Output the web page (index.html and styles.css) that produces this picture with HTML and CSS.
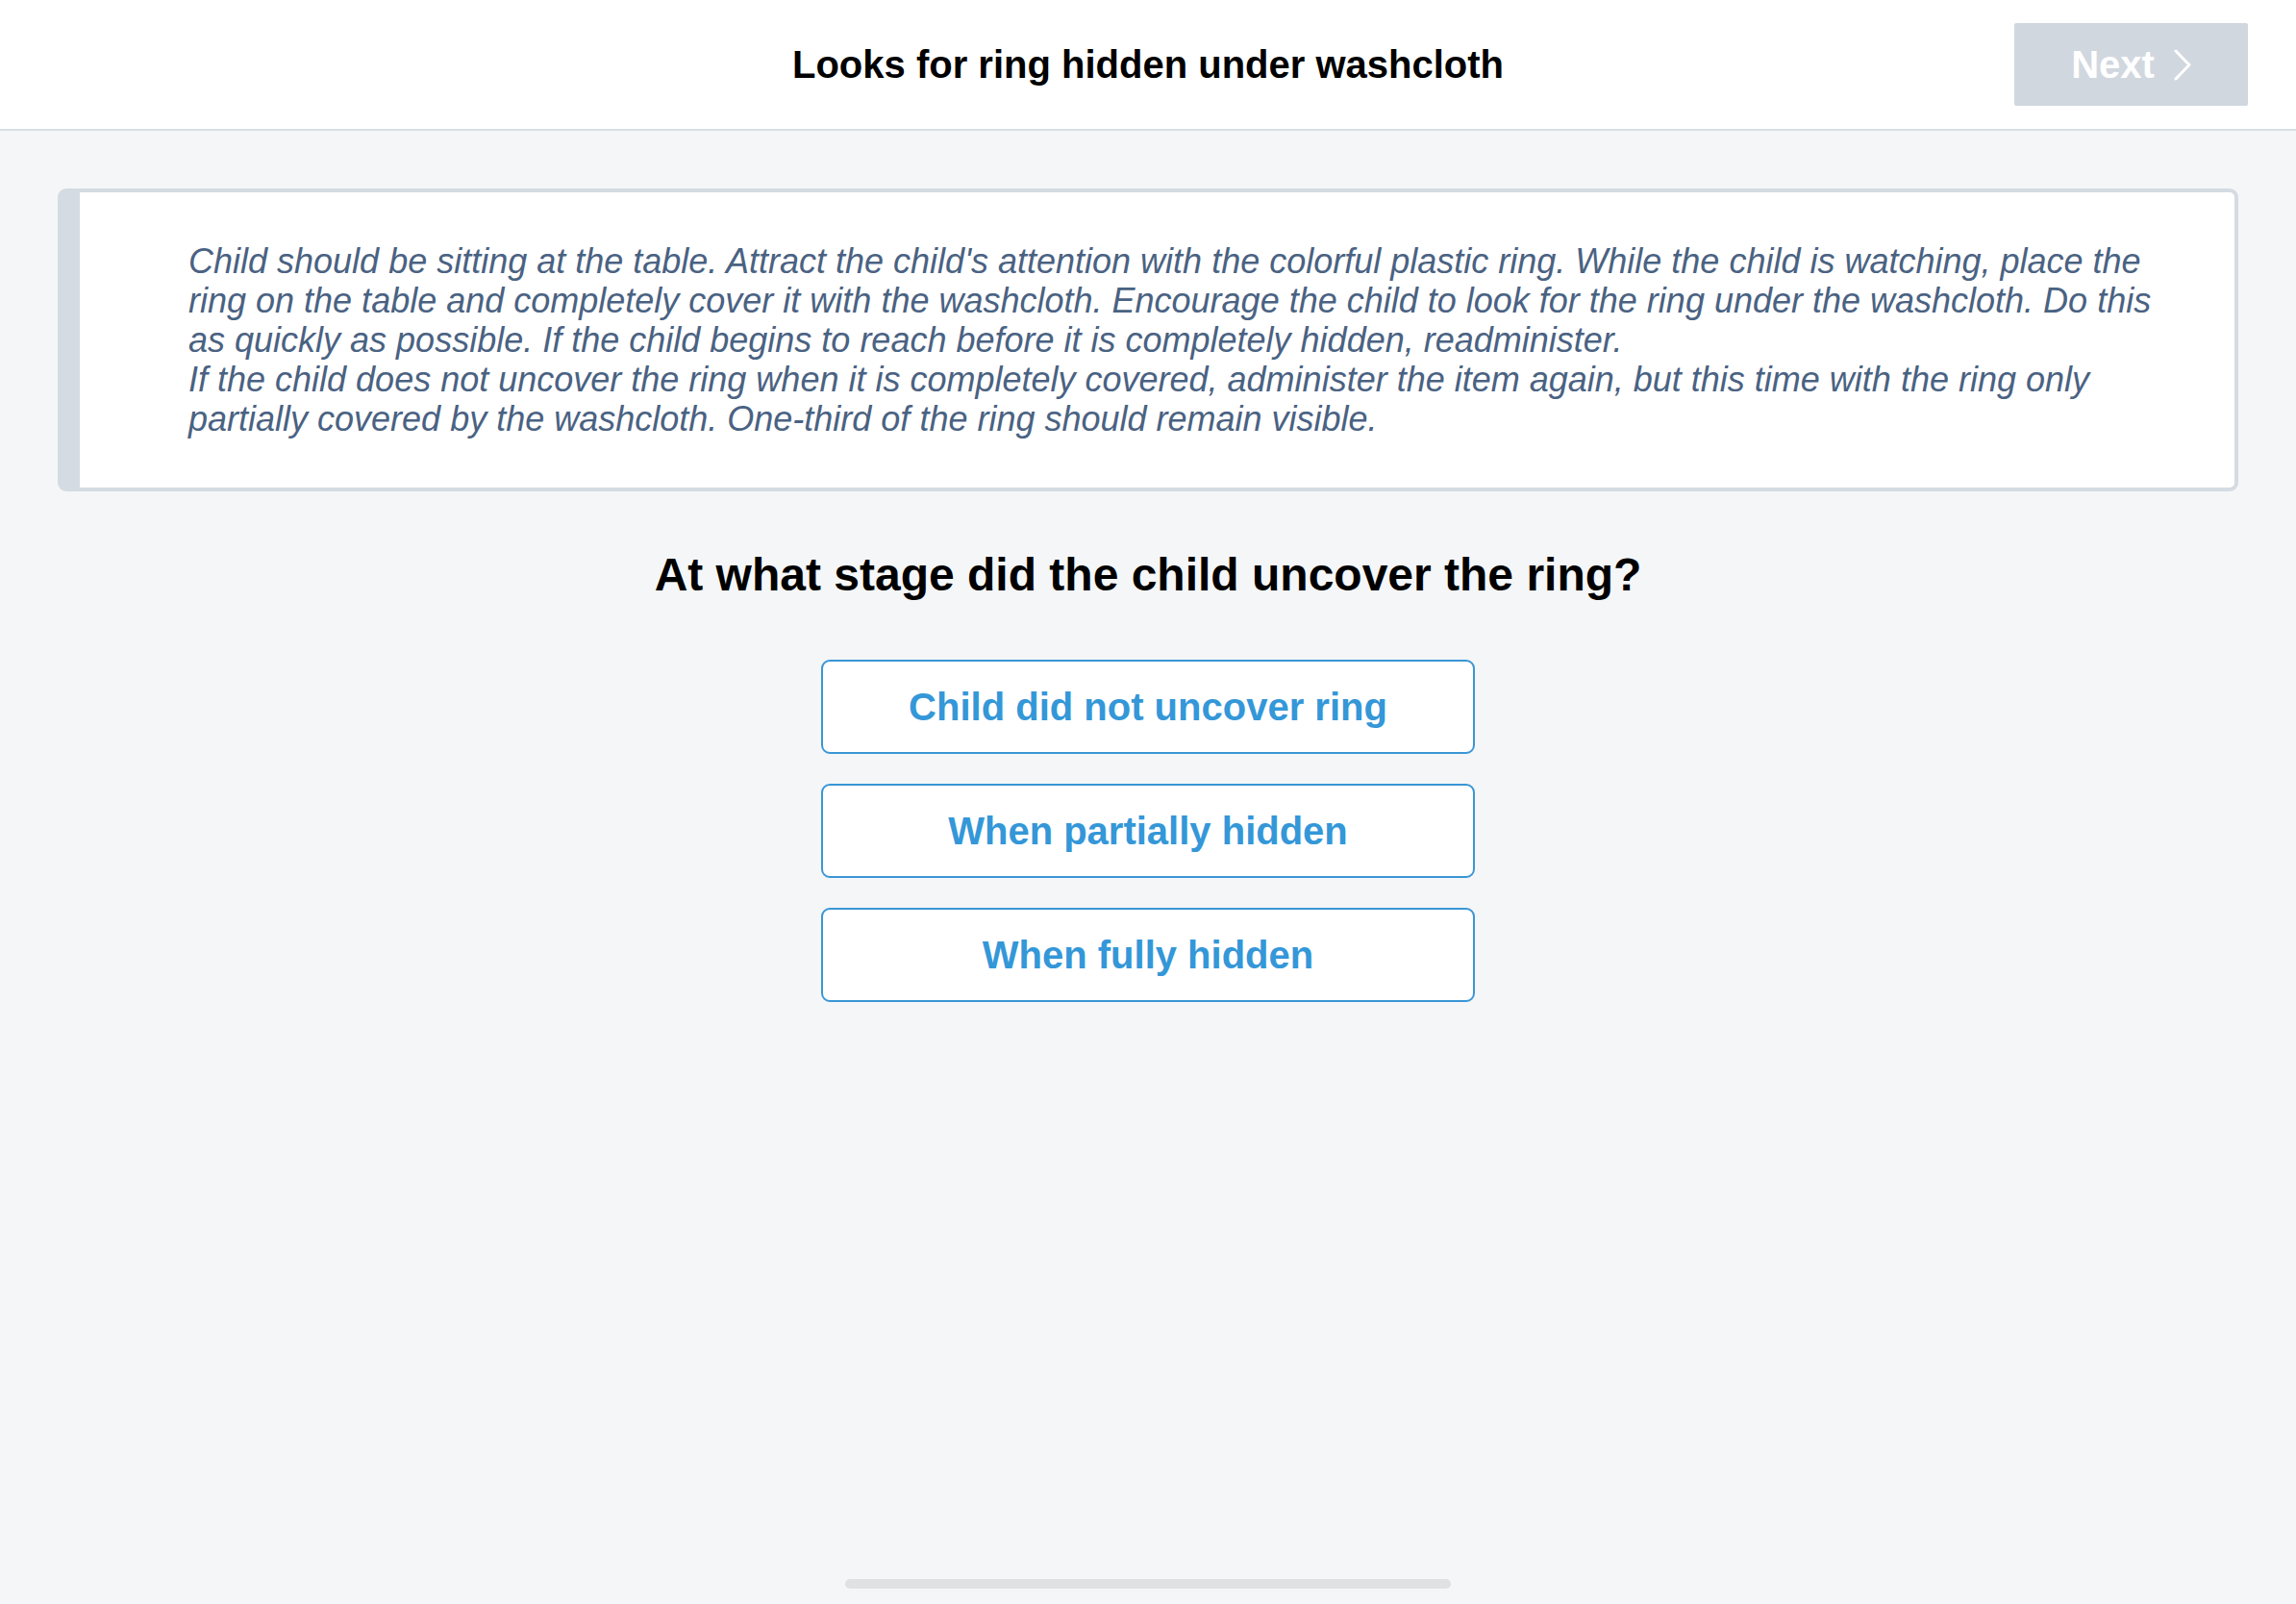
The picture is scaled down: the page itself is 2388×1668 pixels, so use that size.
FILE: index.html
```html
<!DOCTYPE html>
<html lang="en">
<head>
<meta charset="utf-8">
<title>Looks for ring hidden under washcloth</title>
<link rel="stylesheet" href="styles.css">
</head>
<body>
<div class="app">
  <header class="topbar">
    <div class="topbar-side"></div>
    <h1 class="topbar-title">Looks for ring hidden under washcloth</h1>
    <div class="topbar-side topbar-right">
      <button class="next-btn" type="button" disabled>
        <span>Next</span>
        <svg class="next-chevron" width="18" height="33" viewBox="0 0 18 33" aria-hidden="true">
          <polyline points="2,2 16,16.5 2,31" fill="none" stroke="#ffffff" stroke-width="3" stroke-linecap="round" stroke-linejoin="round"/>
        </svg>
      </button>
    </div>
  </header>

  <main class="content">
    <section class="instructions">
      <p>Child should be sitting at the table. Attract the child's attention with the colorful plastic ring. While the child is watching, place the ring on the table and completely cover it with the washcloth. Encourage the child to look for the ring under the washcloth. Do this as quickly as possible. If the child begins to reach before it is completely hidden, readminister.</p>
      <p>If the child does not uncover the ring when it is completely covered, administer the item again, but this time with the ring only partially covered by the washcloth. One-third of the ring should remain visible.</p>
    </section>

    <h2 class="question">At what stage did the child uncover the ring?</h2>

    <div class="options">
      <button class="option" type="button">Child did not uncover ring</button>
      <button class="option" type="button">When partially hidden</button>
      <button class="option" type="button">When fully hidden</button>
    </div>
  </main>

  <footer class="home-area">
    <div class="home-indicator"></div>
  </footer>
</div>
</body>
</html>
```

FILE: styles.css
```css
* {
  box-sizing: border-box;
}

html, body {
  margin: 0;
  padding: 0;
}

body {
  font-family: "Liberation Sans", Arial, Helvetica, sans-serif;
  background: #f4f6f8;
  color: #000;
}

.app {
  display: flex;
  flex-direction: column;
  width: 2388px;
  height: 1668px;
}

.topbar {
  display: grid;
  grid-template-columns: 1fr auto 1fr;
  align-items: center;
  height: 136px;
  background: #ffffff;
  border-bottom: 2px solid #d8dee5;
  padding: 0 50px;
  flex: none;
}

.topbar-title {
  margin: 0;
  font-size: 40px;
  font-weight: 700;
  color: #000;
  text-align: center;
  line-height: 46px;
}

.topbar-right {
  display: flex;
  justify-content: flex-end;
}

.next-btn {
  display: flex;
  align-items: center;
  justify-content: center;
  gap: 20px;
  width: 243px;
  height: 86px;
  border: none;
  border-radius: 2px;
  background: #d1d7df;
  color: #ffffff;
  font-family: inherit;
  font-size: 40px;
  font-weight: 700;
  padding: 0;
  cursor: default;
}

.next-chevron {
  display: block;
}

.content {
  flex: 1;
  display: flex;
  flex-direction: column;
  align-items: center;
  padding: 60px 60px 0;
}

.instructions {
  align-self: stretch;
  background: #ffffff;
  border: 4px solid #d5dbe2;
  border-left-width: 23px;
  border-radius: 9px;
  padding: 51px 55px 51px 113px;
}

.instructions p {
  margin: 0;
  font-size: 36px;
  line-height: 41px;
  font-style: italic;
  color: #4a6282;
}

.question {
  margin: 59px 0 0;
  font-size: 48px;
  line-height: 55px;
  font-weight: 700;
  color: #000;
  text-align: center;
}

.options {
  display: flex;
  flex-direction: column;
  gap: 31px;
  margin-top: 61px;
}

.option {
  width: 680px;
  height: 98px;
  background: #ffffff;
  border: 2px solid #3a96d5;
  border-radius: 9px;
  color: #3497d8;
  font-family: inherit;
  font-size: 40px;
  font-weight: 700;
  padding: 0;
  cursor: pointer;
}

.home-area {
  flex: none;
  display: flex;
  justify-content: center;
  padding-bottom: 16px;
}

.home-indicator {
  width: 630px;
  height: 10px;
  border-radius: 5px;
  background: #e0e1e3;
}
```
